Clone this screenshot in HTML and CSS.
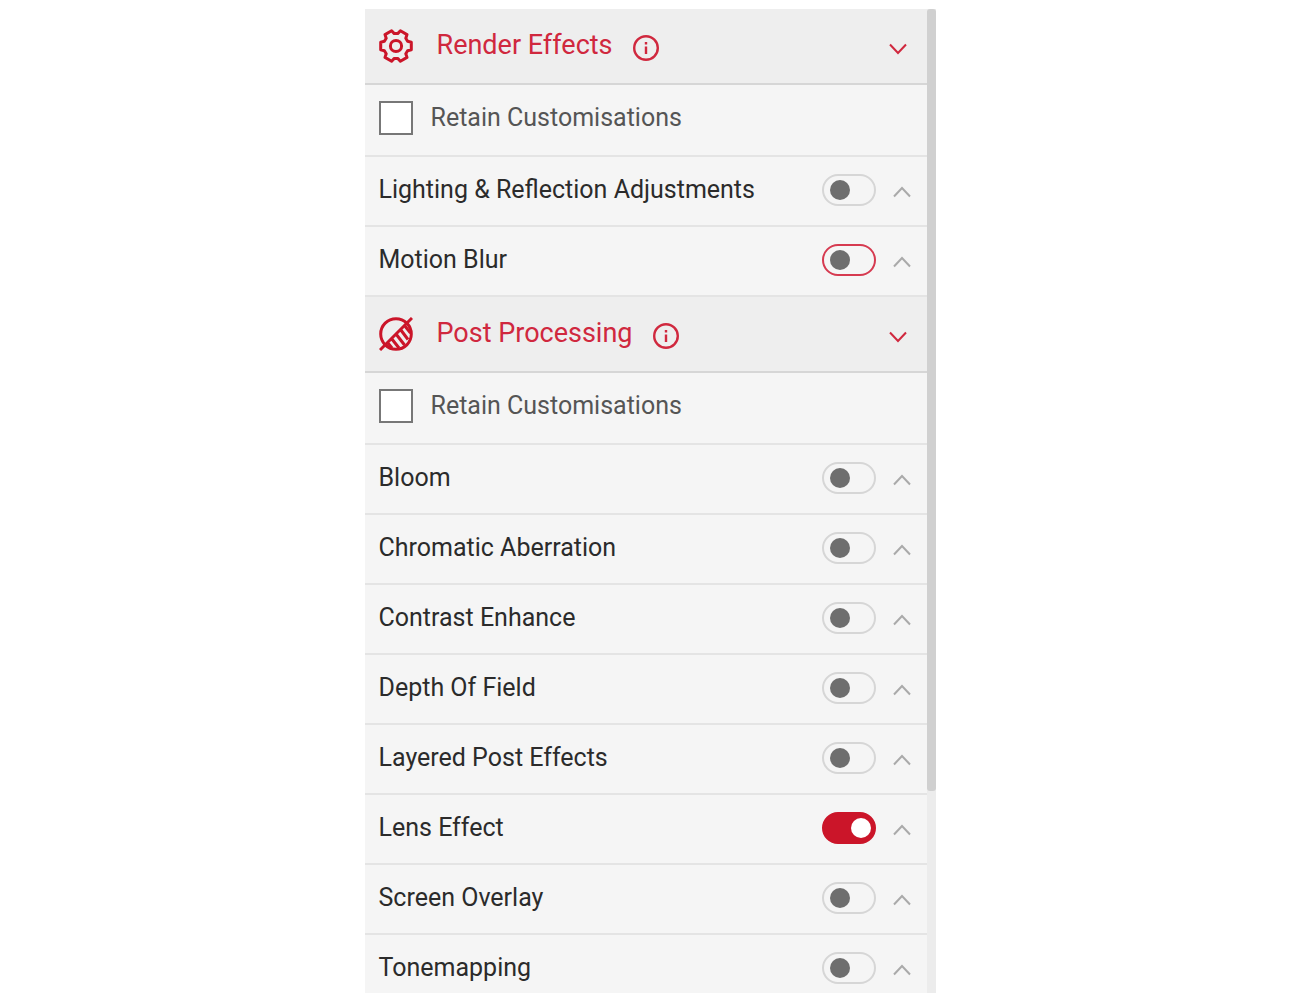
FILE: index.html
```html
<!DOCTYPE html>
<html lang="en">
<head>
<meta charset="utf-8">
<meta name="viewport" content="width=device-width, initial-scale=1">
<title>Effects</title>
<link rel="stylesheet" href="styles.css">
</head>
<body>
<svg class="defs" aria-hidden="true">
  <symbol id="up" viewBox="0 0 18 12"><path d="M1 10.500 9 2l8 8.500"/></symbol>
  <symbol id="down" viewBox="0 0 18 12"><path d="M1 1.500 9 10l8-8.500"/></symbol>
  <symbol id="info" viewBox="0 0 26 26"><circle cx="13" cy="13" r="11.800"/><path d="M13 11.500v7.500M13 7v2.500"/></symbol>
</svg>
<main class="panel">
  <div class="content">
    <section>
      <header class="head">
        <svg class="head-icon" viewBox="-17 -17 34 34" aria-hidden="true">
          <path d="M15.300-3.800V3.800L11.600 4.700 9.800 7.700 11 11.400 4.400 15.200 1.700 12.400H-1.700L-4.400 15.200-11 11.400-9.800 7.700-11.600 4.700-15.300 3.800V-3.800L-11.600-4.700-9.800-7.700-11-11.400-4.400-15.200-1.700-12.400H1.700L4.400-15.200 11-11.400 9.800-7.700 11.600-4.700Z"/>
          <circle r="5.600"/>
        </svg>
        <h2>Render Effects</h2>
        <button class="info" aria-label="About render effects"><svg><use href="#info"/></svg></button>
        <button class="chevron" aria-label="Collapse render effects"><svg><use href="#down"/></svg></button>
      </header>
      <label class="retain"><input type="checkbox">Retain Customisations</label>
      <div class="row"><label for="lighting">Lighting &amp; Reflection Adjustments</label><input class="switch" type="checkbox" id="lighting"><button class="chevron" aria-label="Expand"><svg><use href="#up"/></svg></button></div>
      <div class="row"><label for="motion">Motion Blur</label><input class="switch active" type="checkbox" id="motion"><button class="chevron" aria-label="Expand"><svg><use href="#up"/></svg></button></div>
    </section>
    <section>
      <header class="head">
        <svg class="head-icon" viewBox="-17 -17 34 34" aria-hidden="true">
          <circle r="15.300"/>
          <path d="M-16 16 16-16M-8.500 8.500-4 14M-4.500 4.500 3 14M0 0 8.500 11M4.500-4.500 12 5.500M8.500-8.500 14.500-1"/>
        </svg>
        <h2>Post Processing</h2>
        <button class="info" aria-label="About post processing"><svg><use href="#info"/></svg></button>
        <button class="chevron" aria-label="Collapse post processing"><svg><use href="#down"/></svg></button>
      </header>
      <label class="retain"><input type="checkbox">Retain Customisations</label>
      <div class="row"><label for="bloom">Bloom</label><input class="switch" type="checkbox" id="bloom"><button class="chevron" aria-label="Expand"><svg><use href="#up"/></svg></button></div>
      <div class="row"><label for="chromatic">Chromatic Aberration</label><input class="switch" type="checkbox" id="chromatic"><button class="chevron" aria-label="Expand"><svg><use href="#up"/></svg></button></div>
      <div class="row"><label for="contrast">Contrast Enhance</label><input class="switch" type="checkbox" id="contrast"><button class="chevron" aria-label="Expand"><svg><use href="#up"/></svg></button></div>
      <div class="row"><label for="depth">Depth Of Field</label><input class="switch" type="checkbox" id="depth"><button class="chevron" aria-label="Expand"><svg><use href="#up"/></svg></button></div>
      <div class="row"><label for="layered">Layered Post Effects</label><input class="switch" type="checkbox" id="layered"><button class="chevron" aria-label="Expand"><svg><use href="#up"/></svg></button></div>
      <div class="row"><label for="lens">Lens Effect</label><input class="switch" type="checkbox" id="lens" checked><button class="chevron" aria-label="Expand"><svg><use href="#up"/></svg></button></div>
      <div class="row"><label for="overlay">Screen Overlay</label><input class="switch" type="checkbox" id="overlay"><button class="chevron" aria-label="Expand"><svg><use href="#up"/></svg></button></div>
      <div class="row"><label for="tone">Tonemapping</label><input class="switch" type="checkbox" id="tone"><button class="chevron" aria-label="Expand"><svg><use href="#up"/></svg></button></div>
    </section>
  </div>
  <div class="track"><div class="thumb"></div></div>
</main>
</body>
</html>
```
FILE: styles.css
```css
* { box-sizing: border-box; }

body {
  margin: 0;
  padding: 9px 0 7px;
  background: #fff;
  color: #2b2b2b;
  font: 25px/32px Roboto, "Liberation Sans", sans-serif;
}

.defs { display: block; width: 0; height: 0; }

.panel {
  display: flex;
  width: 100%;
  max-width: 571px;
  height: calc(100vh - 16px);
  margin: 0 auto;
  overflow: hidden;
  background: #f5f5f5;
}

.content { flex: 1; min-width: 0; }

.head, .row, .retain {
  display: flex;
  align-items: center;
  border-bottom: 2px solid #e4e4e4;
}

.head {
  height: 76px;
  padding: 0 20px 0 14px;
  background: #eee;
  border-color: #d6d6d6;
  color: #d0283e;
}

.head h2 {
  margin: 0 20px 2px 24px;
  font-size: 27px;
  font-weight: 400;
}

.head-icon {
  width: 34px;
  height: 34px;
  fill: none;
  stroke: #cb1529;
  stroke-width: 3;
  stroke-linejoin: round;
}

button {
  padding: 0;
  border: 0;
  background: none;
  color: inherit;
}

button svg {
  display: block;
  width: 100%;
  height: 100%;
  fill: none;
  stroke: currentColor;
  stroke-width: 2;
}

.info { width: 26px; height: 26px; margin-top: 3px; }

.info svg { stroke-width: 2.4; }

.chevron { width: 18px; height: 12px; margin-top: 4px; }

.head .chevron { margin: 6px 0 0 auto; }

.retain {
  height: 72px;
  gap: 18px;
  padding: 0 14px 4px;
  color: #555;
}

.retain input {
  appearance: none;
  width: 34px;
  height: 34px;
  margin: 0;
  border: 2px solid #777;
  background: #fff;
}

.row { height: 70px; padding: 0 16px 2px 14px; }

.row label { flex: 1; }

.row .chevron { color: #aaa; }

.switch {
  appearance: none;
  display: flex;
  align-items: center;
  width: 54px;
  height: 32px;
  margin: 0 17px 0 0;
  padding: 0 6px;
  border: 2px solid #d6d6d6;
  border-radius: 16px;
}

.switch::before {
  content: "";
  width: 20px;
  height: 20px;
  border-radius: 50%;
  background: #6e6e6e;
}

.switch.active { border-color: #d63a50; }

.switch:checked {
  justify-content: flex-end;
  padding: 0 3px;
  border-color: #cb1529;
  background: #cb1529;
}

.switch:checked::before { background: #fff; }

.track {
  display: grid;
  grid-template-rows: 31fr 8fr;
  width: 9px;
  background: #ececec;
}

.thumb { border-radius: 3px; background: #d0d0d0; }
```
